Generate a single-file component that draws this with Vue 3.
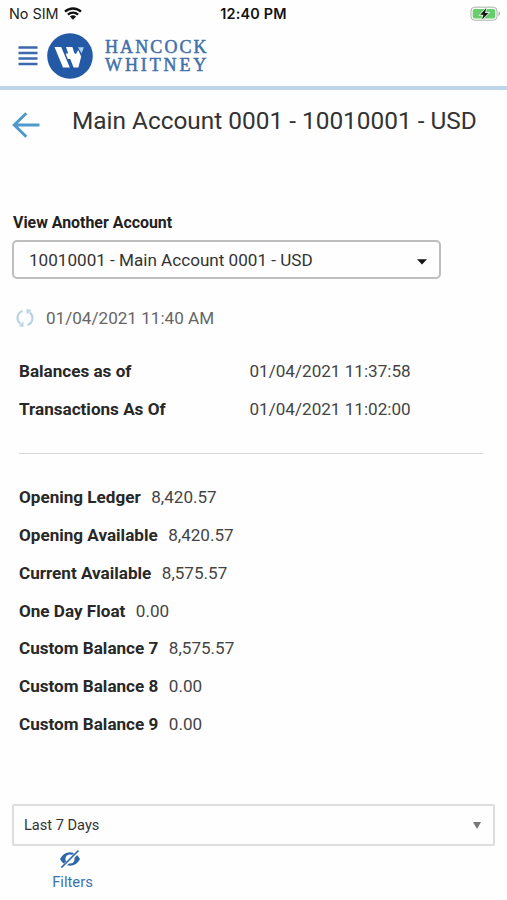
<script setup>
const timestamps = [
  { label: 'Balances as of', value: '01/04/2021 11:37:58' },
  { label: 'Transactions As Of', value: '01/04/2021 11:02:00' },
]
const balances = [
  { label: 'Opening Ledger', value: '8,420.57' },
  { label: 'Opening Available', value: '8,420.57' },
  { label: 'Current Available', value: '8,575.57' },
  { label: 'One Day Float', value: '0.00' },
  { label: 'Custom Balance 7', value: '8,575.57' },
  { label: 'Custom Balance 8', value: '0.00' },
  { label: 'Custom Balance 9', value: '0.00' },
]
</script>

<template>
  <div class="screen">
    <div class="status">
      <div class="carrier">
        <span>No SIM</span>
        <svg class="wifi" viewBox="0 0 18 13" width="18" height="13">
          <g fill="none" stroke="#111" stroke-width="2.3">
            <path d="M1 4.7A11.6 11.6 0 0 1 17 4.7" />
            <path d="M3.9 7.7A7.4 7.4 0 0 1 14.1 7.7" />
          </g>
          <path d="M5.9 9.6A4.5 4.5 0 0 1 12.1 9.6L9 12.8Z" fill="#111" />
        </svg>
      </div>
      <span class="clock">12:40 PM</span>
      <svg class="battery" viewBox="0 0 31 16" width="31" height="16">
        <rect x="1" y="1.2" width="26" height="13" rx="3.8" fill="#fff" stroke="#a9b3a9" stroke-width="1" />
        <rect x="2.7" y="2.9" width="22.6" height="9.6" rx="2" fill="#67cd6d" />
        <path d="M28.5 5.3Q30.2 6 30.2 7.6T28.5 10Z" fill="#a9b3a9" />
        <path d="M16.2 2.2L10.2 8.8H13.5L12 13.4L18.4 6.9H15Z" fill="#111" stroke="#d9f2da" stroke-width="1.7" paint-order="stroke" />
      </svg>
    </div>

    <header class="brandbar">
      <svg class="menu" viewBox="0 0 20 20" width="20" height="20">
        <path d="M.5 1.5H19.5M.5 7H19.5M.5 12.5H19.5M.5 18H19.5" stroke="#3d68ae" stroke-width="2.4" />
      </svg>
      <svg class="emblem" viewBox="0 0 46 46" width="46" height="46">
        <circle cx="23" cy="23" r="22.8" fill="#2459a5" />
        <path d="M7.5 14H14.2L22.8 34.5H16Z" fill="#fff" />
        <path d="M19 14H25.4L27.4 20.2L29 21L31.2 17L34.2 23.5L31.4 34.5H26.6L23.2 26H20.8L18.6 20.6H21.2Z" fill="#fff" />
        <path d="M31 14.2H36.8L34.6 20.4Z" fill="#a9d5f0" />
      </svg>
      <div class="wordmark">
        <span class="hancock">HANCOCK</span>
        <span class="whitney">WHITNEY</span>
      </div>
    </header>

    <div class="heading">
      <svg class="back" viewBox="0 0 28 28" width="28" height="28">
        <path d="M27.5 14H2.5M14.3 2.2L2.3 14L14.3 25.8" fill="none" stroke="#4f9acb" stroke-width="3" />
      </svg>
      <h1>Main Account 0001 - 10010001 - USD</h1>
    </div>

    <main>
      <div class="picker-label">View Another Account</div>
      <div class="picker">
        <span>10010001 - Main Account 0001 - USD</span>
        <svg viewBox="0 0 10 6" width="10" height="6"><path d="M0 .3H10L5 5.6Z" fill="#151515" /></svg>
      </div>
      <div class="refresh">
        <svg viewBox="0 0 18 20" width="18" height="20">
          <g fill="none" stroke="#b9d5e2" stroke-width="2.2">
            <path d="M6.5 3A7.3 7.3 0 0 0 4.4 15.7" />
            <path d="M11.5 17A7.3 7.3 0 0 0 13.6 4.3" />
          </g>
          <path d="M7.5 13.5V19L2.5 18ZM10.5 6.5V1L15.5 2Z" fill="#b9d5e2" />
        </svg>
        <span>01/04/2021 11:40 AM</span>
      </div>

      <dl class="timestamps">
        <div v-for="t in timestamps" :key="t.label" class="row">
          <dt>{{ t.label }}</dt>
          <dd>{{ t.value }}</dd>
        </div>
      </dl>
      <dl class="balances">
        <div v-for="b in balances" :key="b.label" class="row">
          <dt>{{ b.label }}</dt>
          <dd>{{ b.value }}</dd>
        </div>
      </dl>

      <div class="range">
        <span>Last 7 Days</span>
        <svg viewBox="0 0 8 7" width="8" height="7"><path d="M0 0H8L4 7Z" fill="#777" /></svg>
      </div>
      <div class="filters">
        <svg viewBox="0 0 22 18" width="22" height="18">
          <path d="M1 9Q4.5 2.2 11 2.2T21 9Q17.5 15.8 11 15.8T1 9Z" fill="#2c67aa" />
          <ellipse cx="11" cy="9" rx="4.6" ry="4.6" fill="#fff" />
          <path d="M3.4 17.6L19.6 1" stroke="#fff" stroke-width="3.6" />
          <path d="M2.4 17.5L19.5 .5" stroke="#2c67aa" stroke-width="1.6" />
        </svg>
        <span>Filters</span>
      </div>
    </main>
  </div>
</template>

<style>
body {
  background: #fefefe;
}
</style>

<style scoped>
.screen {
  width: 507px;
  height: 900px;
  overflow: hidden;
  box-sizing: border-box;
  background: #fefefe;
  color: #333;
  font-family: Roboto, "Liberation Sans", sans-serif;
}
svg {
  display: block;
  flex: none;
}
span,
h1,
dt,
dd {
  white-space: nowrap;
}
.status {
  height: 27px;
  display: grid;
  grid-template-columns: 1fr auto 1fr;
  align-items: center;
  padding: 0 6px 0 9px;
  font-family: Inter, sans-serif;
  font-size: 14.4px;
  color: #222;
}
.carrier {
  display: flex;
  align-items: center;
  gap: 5px;
}
.clock {
  font-weight: 600;
  letter-spacing: 0.2px;
  color: #111;
  margin-right: 3px;
}
.battery {
  justify-self: end;
}
.brandbar {
  height: 59px;
  display: flex;
  align-items: center;
  padding: 0 18px;
  border-bottom: 4px solid #bcd5e9;
}
.menu {
  margin-bottom: 1px;
}
.emblem {
  margin-left: 9px;
  margin-bottom: 1px;
}
.wordmark {
  margin-left: 12px;
  margin-bottom: 1px;
  display: flex;
  flex-direction: column;
  font-family: "Liberation Serif", serif;
  font-size: 18px;
  line-height: 18px;
  color: #4270ab;
  -webkit-text-stroke: 0.5px #4270ab;
}
.hancock {
  letter-spacing: 2.1px;
}
.whitney {
  letter-spacing: 2.9px;
}
.heading {
  height: 62px;
  display: flex;
  align-items: flex-start;
  padding: 15px 0 0 12px;
}
.back {
  margin-top: 6px;
}
h1 {
  margin: 0 0 0 32px;
  font-size: 24.4px;
  line-height: 32px;
  font-weight: 400;
}
main {
  padding: 45px 12px 0 12px;
}
.picker-label {
  height: 28px;
  line-height: 22px;
  padding-left: 1px;
  font-size: 15.9px;
  font-weight: 700;
  color: #222;
}
.picker {
  width: 429px;
  height: 39px;
  box-sizing: border-box;
  border: 2px solid #bebebe;
  border-radius: 5px;
  display: flex;
  align-items: center;
  justify-content: space-between;
  padding: 0 12px 0 15px;
  font-size: 17.1px;
}
.picker svg {
  margin-top: 4px;
}
.refresh {
  height: 20px;
  margin-top: 29px;
  padding-left: 4px;
  display: flex;
  align-items: center;
  gap: 12px;
  font-size: 17.1px;
  color: #666;
}
dl {
  margin: 0 12px 0 7px;
  font-size: 17.1px;
}
.row {
  height: 37.85px;
  display: flex;
  align-items: center;
}
dt {
  font-weight: 700;
  color: #282828;
}
dd {
  margin: 0 0 0 10.5px;
  color: #444;
}
.timestamps {
  padding: 24px 0 25px;
  border-bottom: 1px solid #d8d8d8;
}
.timestamps dt {
  width: 230.5px;
}
.timestamps dd {
  margin: 0;
}
.balances {
  padding-top: 24.4px;
}
.range {
  margin-top: 61px;
  width: 483px;
  height: 42px;
  box-sizing: border-box;
  border: 2px solid #ddd;
  border-radius: 2px;
  display: flex;
  align-items: center;
  justify-content: space-between;
  padding: 1px 12px 0 10px;
  font-size: 14.6px;
}
.filters {
  width: 121px;
  padding-top: 4px;
  display: flex;
  flex-direction: column;
  align-items: center;
  gap: 4px;
  font-size: 14.8px;
  line-height: 20px;
  color: #3c72b2;
}
.filters svg {
  margin-right: 5px;
}
</style>
